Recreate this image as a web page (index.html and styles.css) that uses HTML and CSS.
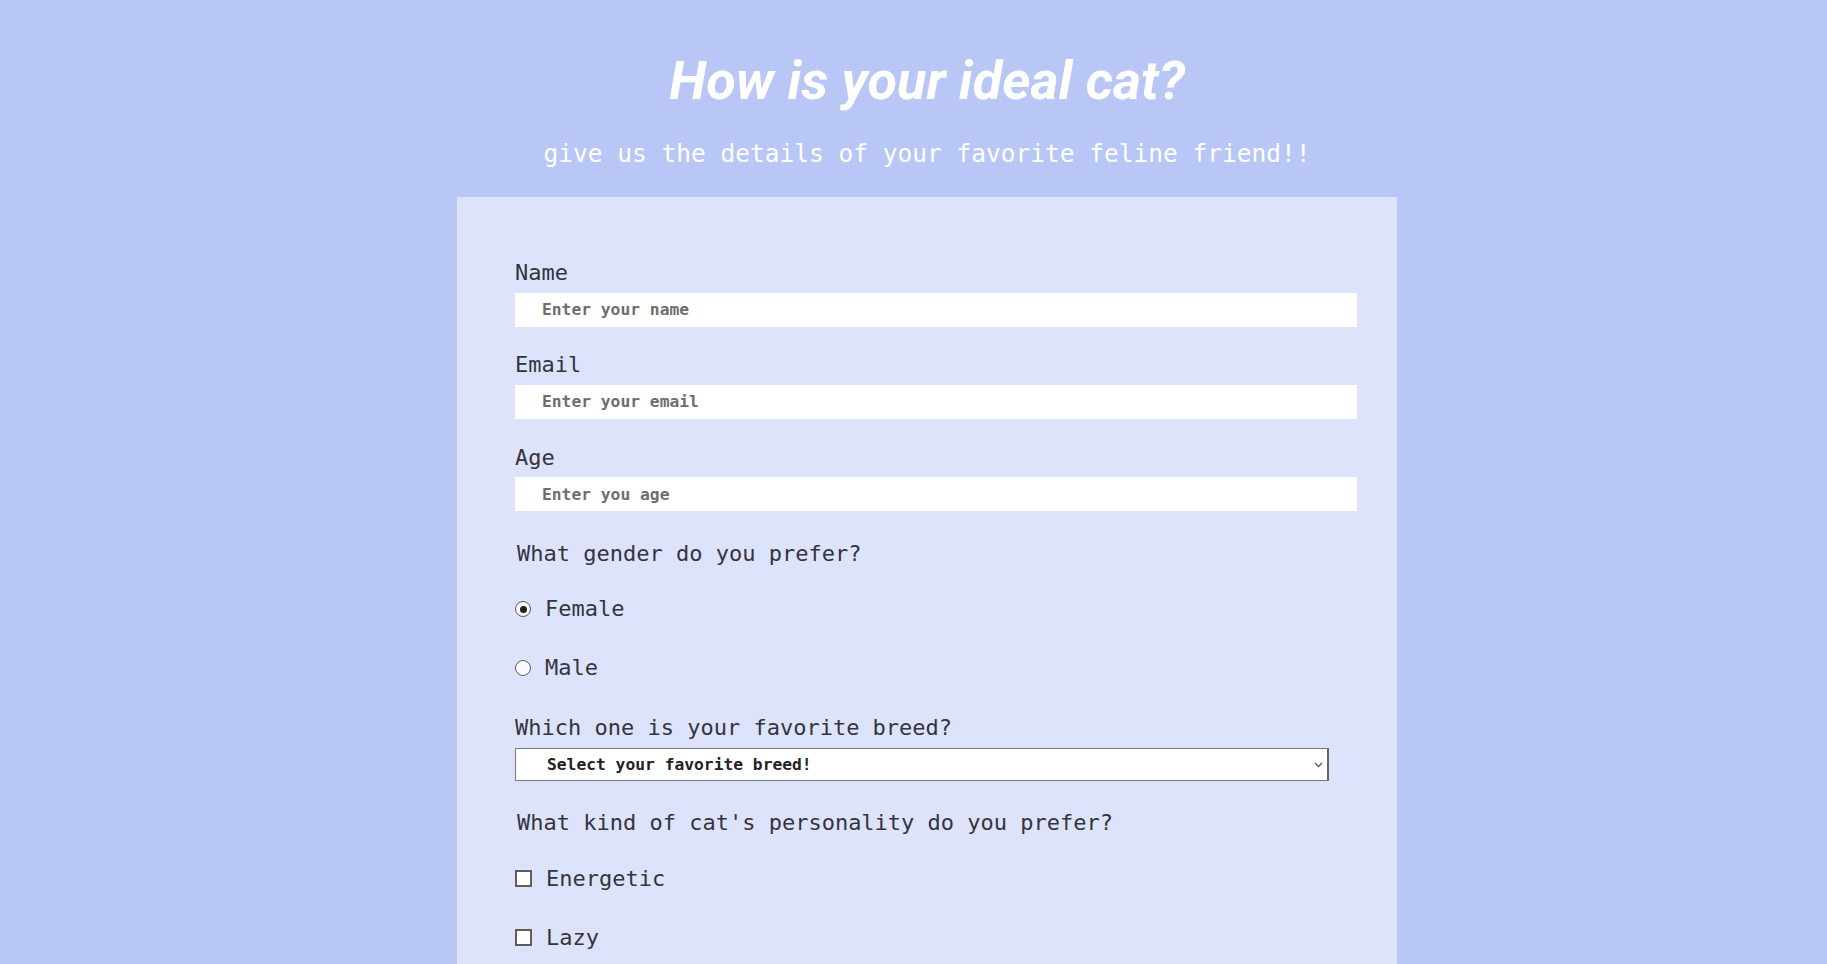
FILE: index.html
```html
<!DOCTYPE html>
<html lang="en">
<head>
<meta charset="utf-8">
<title>How is your ideal cat?</title>
<link rel="stylesheet" href="styles.css">
</head>
<body>
  <header class="hero">
    <h1 class="title">How is your ideal cat?</h1>
    <p class="subtitle">give us the details of your favorite feline friend!!</p>
  </header>
  <form class="card">
    <div class="field">
      <label class="label" for="name">Name</label>
      <input class="text-input" id="name" type="text" placeholder="Enter your name">
    </div>
    <div class="field">
      <label class="label" for="email">Email</label>
      <input class="text-input" id="email" type="email" placeholder="Enter your email">
    </div>
    <div class="field">
      <label class="label" for="age">Age</label>
      <input class="text-input" id="age" type="number" placeholder="Enter you age">
    </div>
    <p class="question">What gender do you prefer?</p>
    <div class="options">
      <label class="option"><input class="radio" type="radio" name="gender" checked><span>Female</span></label>
      <label class="option"><input class="radio" type="radio" name="gender"><span>Male</span></label>
    </div>
    <div class="field field-select">
      <label class="label" for="breed">Which one is your favorite breed?</label>
      <div class="select-wrap">
        <select class="select" id="breed">
          <option>Select your favorite breed!</option>
        </select>
        <svg class="chevron" width="9" height="6" viewBox="0 0 9 6"><path d="M1 1 L4.5 4.5 L8 1" fill="none" stroke="#555" stroke-width="1.3"/></svg>
      </div>
    </div>
    <p class="question">What kind of cat's personality do you prefer?</p>
    <div class="options">
      <label class="option"><input class="check" type="checkbox"><span>Energetic</span></label>
      <label class="option"><input class="check" type="checkbox"><span>Lazy</span></label>
    </div>
  </form>
</body>
</html>
```

FILE: styles.css
```css
html, body {
  margin: 0;
  background: #b9c7f6;
}
body {
  padding: 0 0 60px 27px;
  font-family: "DejaVu Sans Mono", "Liberation Mono", monospace;
  color: #34343f;
}
.hero {
  text-align: center;
}
.title {
  margin: 51px 0 0;
  font-family: Roboto, "Liberation Sans", sans-serif;
  font-style: italic;
  font-weight: 700;
  font-size: 54px;
  line-height: 60px;
  color: #ffffff;
}
.subtitle {
  margin: 28px 0 0;
  font-size: 24.5px;
  line-height: 30px;
  color: #ffffff;
}
.card {
  width: 940px;
  box-sizing: border-box;
  margin: 28px auto 0;
  padding: 63px 40px 60px 58px;
  background: #dee3fc;
}
.field {
  display: flex;
  flex-direction: column;
  margin-bottom: 25.8px;
}
.label {
  font-size: 22px;
  line-height: 26px;
  margin-bottom: 6.5px;
}
.text-input {
  height: 34px;
  box-sizing: border-box;
  border: none;
  outline: none;
  padding: 0 0 0 27px;
  background: #ffffff;
  font-family: "DejaVu Sans Mono", monospace;
  font-size: 16.3px;
  font-weight: 700;
  color: #333;
}
.text-input::placeholder {
  color: #6e6e6e;
}
.text-input::-webkit-outer-spin-button,
.text-input::-webkit-inner-spin-button {
  -webkit-appearance: none;
  margin: 0;
}
.question {
  margin: 29.5px 0 0 2px;
  font-size: 22px;
  line-height: 26px;
}
.options {
  display: flex;
  flex-direction: column;
  gap: 33px;
  margin-top: 29.5px;
}
.option {
  display: flex;
  align-items: center;
  gap: 14px;
  font-size: 22px;
  line-height: 26px;
}
.radio {
  appearance: none;
  -webkit-appearance: none;
  margin: 0;
  width: 16px;
  height: 16px;
  border: 1.5px solid #5a5a5a;
  border-radius: 50%;
  background: #fafafa;
  box-sizing: border-box;
  display: grid;
  place-items: center;
}
.radio:checked::after {
  content: "";
  width: 7px;
  height: 7px;
  border-radius: 50%;
  background: #1e1e1e;
}
.check {
  appearance: none;
  -webkit-appearance: none;
  margin: 0;
  width: 17px;
  height: 17px;
  box-sizing: border-box;
  border: 2px solid #5e5e5e;
  background: #ffffff;
}
.field-select {
  margin-top: 34px;
  margin-bottom: 0;
}
.field-select .label {
  margin-bottom: 7px;
}
.select-wrap {
  position: relative;
  width: 814px;
}
.select {
  appearance: none;
  -webkit-appearance: none;
  width: 100%;
  height: 33px;
  box-sizing: border-box;
  border: 1px solid #7a7a7a;
  border-right: 2px solid #666;
  border-radius: 0;
  background: #ffffff;
  padding: 0 0 0 31px;
  font-family: "DejaVu Sans Mono", monospace;
  font-size: 16.3px;
  font-weight: 700;
  color: #222;
  outline: none;
}
.chevron {
  position: absolute;
  right: 6px;
  top: 14px;
  pointer-events: none;
}
.field-select + .question {
  margin-top: 29px;
}
```
